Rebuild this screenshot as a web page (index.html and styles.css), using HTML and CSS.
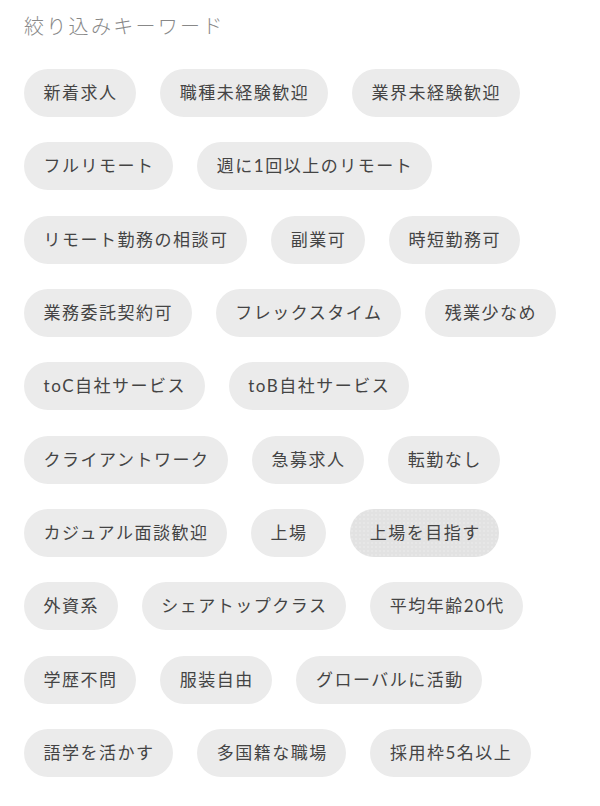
FILE: index.html
```html
<!DOCTYPE html>
<html lang="ja">
<head>
    <meta charset="UTF-8">
    <meta name="viewport" content="width=device-width, initial-scale=1.0">
    <title>絞り込みキーワード</title>
    <link rel="stylesheet" href="styles.css">
</head>
<body>
    <div class="keyword-panel">
        <h2 class="keyword-title">絞り込みキーワード</h2>
        <ul class="keyword-list">
            <li><a class="keyword" href="#">新着求人</a></li>
            <li><a class="keyword" href="#">職種未経験歓迎</a></li>
            <li><a class="keyword" href="#">業界未経験歓迎</a></li>
            <li><a class="keyword" href="#">フルリモート</a></li>
            <li><a class="keyword" href="#">週に1回以上のリモート</a></li>
            <li><a class="keyword" href="#">リモート勤務の相談可</a></li>
            <li><a class="keyword" href="#">副業可</a></li>
            <li><a class="keyword" href="#">時短勤務可</a></li>
            <li><a class="keyword" href="#">業務委託契約可</a></li>
            <li><a class="keyword" href="#">フレックスタイム</a></li>
            <li><a class="keyword" href="#">残業少なめ</a></li>
            <li><a class="keyword" href="#">toC自社サービス</a></li>
            <li><a class="keyword" href="#">toB自社サービス</a></li>
            <li><a class="keyword" href="#">クライアントワーク</a></li>
            <li><a class="keyword" href="#">急募求人</a></li>
            <li><a class="keyword" href="#">転勤なし</a></li>
            <li><a class="keyword" href="#">カジュアル面談歓迎</a></li>
            <li><a class="keyword" href="#">上場</a></li>
            <li><a class="keyword is-hover" href="#">上場を目指す</a></li>
            <li><a class="keyword" href="#">外資系</a></li>
            <li><a class="keyword" href="#">シェアトップクラス</a></li>
            <li><a class="keyword" href="#">平均年齢20代</a></li>
            <li><a class="keyword" href="#">学歴不問</a></li>
            <li><a class="keyword" href="#">服装自由</a></li>
            <li><a class="keyword" href="#">グローバルに活動</a></li>
            <li><a class="keyword" href="#">語学を活かす</a></li>
            <li><a class="keyword" href="#">多国籍な職場</a></li>
            <li><a class="keyword" href="#">採用枠5名以上</a></li>
        </ul>
    </div>
</body>
</html>
```

FILE: styles.css
```css
body {
    margin: 0;
    background-color: #fff;
    font-family: "Lato", "Noto Sans CJK JP", sans-serif;
    color: #333;
}
.keyword-panel {
    padding: 11px 24px 24px;
}
.keyword-title {
    margin: 0 0 28px;
    font-size: 20px;
    line-height: 30px;
    font-weight: 300;
    letter-spacing: 2.3px;
    color: #888;
}
.keyword-list {
    list-style: none;
    margin: 0;
    padding: 0;
    display: flex;
    flex-wrap: wrap;
    gap: 25.33px 24px;
}
.keyword {
    display: block;
    height: 48px;
    line-height: 48px;
    padding: 0 18.6px 0 19.6px;
    border-radius: 24px;
    background-color: #ebebeb;
    color: #444;
    font-size: 17px;
    letter-spacing: 1.5px;
    text-decoration: none;
    white-space: nowrap;
}
.keyword:hover,
.keyword.is-hover {
    background-color: #e2e2e2;
    background-image: radial-gradient(rgba(255, 255, 255, 0.35) 0.6px, transparent 0.8px);
    background-size: 4px 4px;
}
```
